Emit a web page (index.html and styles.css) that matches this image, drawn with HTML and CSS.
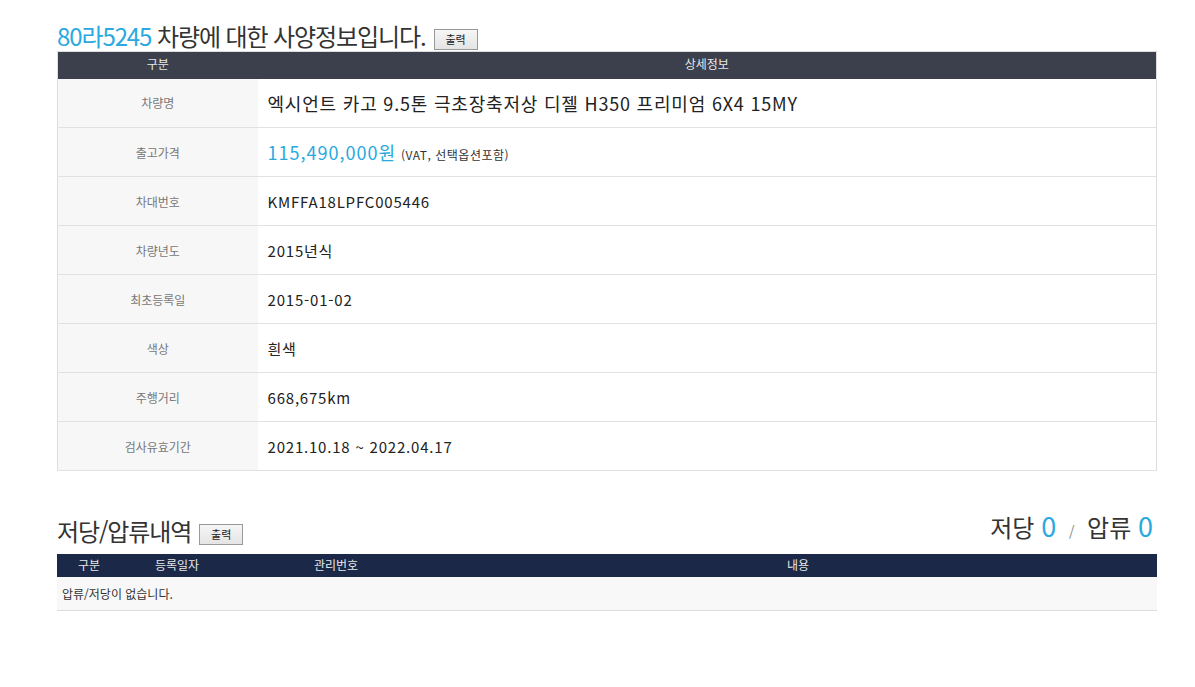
FILE: index.html
```html
<!DOCTYPE html>
<html lang="ko">
<head>
    <meta charset="UTF-8">
    <meta name="viewport" content="width=device-width, initial-scale=1.0">
    <title>차량 사양정보</title>
    <link rel="stylesheet" href="styles.css">
</head>
<body>
    <div class="wrap">
        <!-- 사양정보 -->
        <div class="sec-head">
            <h2 class="sec-title"><span class="car-no">80라5245</span> 차량에 대한 사양정보입니다.</h2>
            <button class="btn-print">출력</button>
        </div>
        <table class="spec">
            <colgroup>
                <col class="c-label">
                <col>
            </colgroup>
            <thead>
                <tr><th>구분</th><th>상세정보</th></tr>
            </thead>
            <tbody>
                <tr><td class="lbl">차량명</td><td class="val big">엑시언트 카고 9.5톤 극초장축저상 디젤 H350 프리미엄 6X4 15MY</td></tr>
                <tr><td class="lbl">출고가격</td><td class="val"><span class="price">115,490,000원</span> <span class="note">(VAT, 선택옵션포함)</span></td></tr>
                <tr><td class="lbl">차대번호</td><td class="val">KMFFA18LPFC005446</td></tr>
                <tr><td class="lbl">차량년도</td><td class="val">2015년식</td></tr>
                <tr><td class="lbl">최초등록일</td><td class="val">2015-01-02</td></tr>
                <tr><td class="lbl">색상</td><td class="val">흰색</td></tr>
                <tr><td class="lbl">주행거리</td><td class="val">668,675km</td></tr>
                <tr><td class="lbl">검사유효기간</td><td class="val">2021.10.18 ~ 2022.04.17</td></tr>
            </tbody>
        </table>

        <!-- 저당/압류 -->
        <div class="sec-head second">
            <h2 class="sec-title">저당/압류내역</h2>
            <button class="btn-print">출력</button>
            <div class="count">저당 <b>0</b> <span class="slash">/</span> 압류 <b>0</b></div>
        </div>
        <table class="lien">
            <colgroup>
                <col style="width:64px">
                <col style="width:112px">
                <col style="width:206px">
                <col>
            </colgroup>
            <thead>
                <tr><th>구분</th><th>등록일자</th><th>관리번호</th><th>내용</th></tr>
            </thead>
            <tbody>
                <tr><td colspan="4" class="empty">압류/저당이 없습니다.</td></tr>
            </tbody>
        </table>
    </div>
</body>
</html>
```

FILE: styles.css
```css
* {
    margin: 0;
    padding: 0;
    box-sizing: border-box;
}

body {
    background: #fff;
    color: #222;
    font-family: 'Noto Sans CJK KR', 'Noto Sans', sans-serif;
}

.wrap {
    width: 1100px;
    margin-left: 57px;
    padding-top: 13px;
}

/* 섹션 제목 */
.sec-head {
    display: flex;
    align-items: flex-end;
    height: 38px;
}

.sec-head.second {
    margin-top: 38px;
    height: 45px;
    padding-bottom: 8px;
}

.sec-title {
    font-size: 24px;
    font-weight: normal;
    color: #333;
    letter-spacing: -1.1px;
    line-height: 30px;
}

.car-no {
    color: #29a9e0;
}

.btn-print {
    margin-left: 8px;
    margin-bottom: 1px;
    width: 44px;
    height: 21px;
    border: 1px solid #999;
    background: linear-gradient(#f6f6f6, #e4e4e4);
    font-family: inherit;
    font-size: 11px;
    color: #222;
    line-height: 17px;
}

.count {
    margin-left: auto;
    margin-right: 4px;
    font-size: 24px;
    color: #333;
    line-height: 30px;
}

.count b {
    font-weight: normal;
    color: #29a9e0;
    font-size: 27px;
}

.slash {
    font-size: 14px;
    color: #888;
    margin: 0 6px;
}

/* 사양정보 표 */
table {
    width: 100%;
    border-collapse: collapse;
}

.spec .c-label {
    width: 200px;
}

.spec {
    border: 1px solid #ddd;
}

.spec th {
    background: #3b404c;
    color: #e8e8e8;
    font-size: 12px;
    font-weight: normal;
    height: 27px;
    padding-bottom: 3px;
}

.spec td {
    border-bottom: 1px solid #e2e2e2;
    height: 49px;
}

.spec .lbl {
    background: #f7f7f7;
    color: #777;
    font-size: 12px;
    text-align: center;
}

.spec .val {
    padding-left: 10px;
    font-size: 15px;
    color: #222;
    letter-spacing: 0.8px;
}

.spec .val.big {
    font-size: 18px;
    letter-spacing: 0.8px;
}

.price {
    color: #29a9e0;
    font-size: 18px;
    letter-spacing: 1px;
}

.note {
    font-size: 12px;
    color: #333;
    letter-spacing: 0.5px;
}

/* 저당/압류 표 */
.lien th {
    background: #1b2848;
    color: #e8e8e8;
    font-size: 12px;
    font-weight: normal;
    height: 23px;
    padding-bottom: 2px;
}

.lien .empty {
    background: #f8f8f8;
    border-bottom: 1px solid #ddd;
    height: 33px;
    padding-left: 5px;
    font-size: 12px;
    color: #333;
}
```
